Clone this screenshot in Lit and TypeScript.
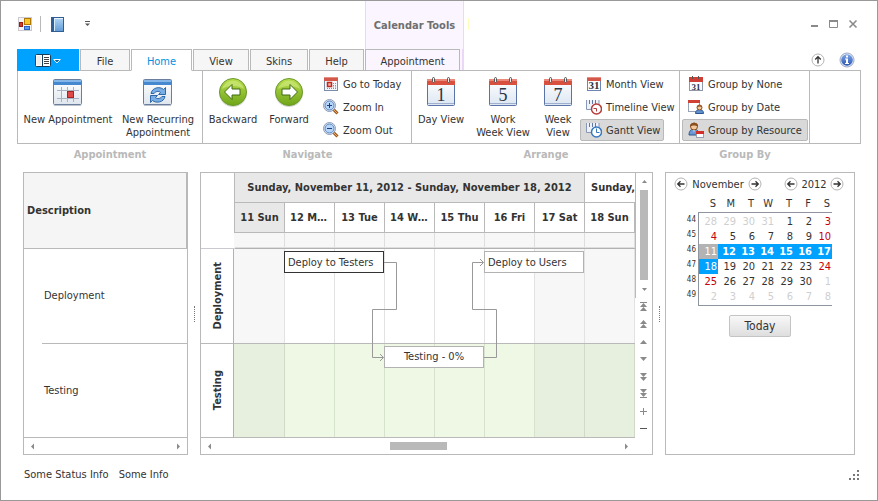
import { LitElement, html, css, svg, nothing } from "lit";
import { customElement, state } from "lit/decorators.js";
import { classMap } from "lit/directives/class-map.js";

/* ---------- icons ---------- */

const bigDefs = (id: string, top: string, bottom: string) => svg`
  <defs><linearGradient id=${id} x1="0" y1="0" x2="0" y2="1">
    <stop offset="0" stop-color=${top}/><stop offset="1" stop-color=${bottom}/>
  </linearGradient></defs>`;

const appIcon = html`<svg width="14" height="14" viewBox="0 0 14 14">
  <rect x=".5" y=".5" width="13" height="13" fill="#f4f4f6" stroke="#c9c9cf"/>
  <rect x="1.500" y="5.500" width="3" height="4" fill="#d23a2a" stroke="#9c1c12"/>
  <rect x="6.500" y="1.500" width="6" height="6" fill="#fbc62b" stroke="#b07a06"/>
  <rect x="6.500" y="9.500" width="5" height="3" fill="#5b9bf0" stroke="#2b62c4"/>
</svg>`;

const bookIcon = html`<svg width="13" height="15" viewBox="0 0 13 15">
  ${bigDefs("bk", "#b4d8f6", "#5f9ad6")}
  <rect x=".5" y=".5" width="12" height="14" fill="url(#bk)" stroke="#2f5f95"/>
  <path d="M1 1h2v13H1z" fill="#2d5f96"/><path d="M3.500 1v13" stroke="#d8ecfb"/>
  <path d="M4 1.500h8" stroke="#e8f3fc"/>
</svg>`;

const fileMenuIcon = html`<svg width="26" height="13" viewBox="0 0 26 13">
  <rect x=".5" y=".5" width="15" height="12" rx="1" fill="#fff" stroke="#123e5c"/>
  <path d="M7.500 1v11" stroke="#123e5c"/><path d="M2 2h4v9H2z" fill="#eee"/>
  <path d="M9 3.500h5M9 5.500h5M9 7.500h5M9 9.500h5" stroke="#444"/>
  <path d="M18.700 5.500h6.600L22 8.900z" fill="#0a5f9a" stroke="#fff"/>
</svg>`;

const calFrame = (inner: unknown) => html`<svg width="32" height="32" viewBox="0 0 32 32">
  ${bigDefs("cf", "#ffffff", "#dfe6ee")}
  <rect x="1.500" y="3.500" width="28" height="25" rx="1" fill="url(#cf)" stroke="#6b7f9c"/>
  <path d="M2 4h27v5H2z" fill="#4688d0"/><path d="M2 4h27v2H2z" fill="#86b6e8"/>
  ${inner}
  <path d="M2 29.500h27" stroke="#bcc3cd"/>
</svg>`;

const newAppt = calFrame(svg`
  <path d="M5 14.500h22M5 22.500h22M9.500 11v15M15.500 11v15M21.500 11v15" stroke="#a7b2c2"/>
  <rect x="15.500" y="15.500" width="6" height="6" fill="#e04848" stroke="#a82424"/>`);

const newRecurring = calFrame(svg`
  <path d="M9 17.500c1-6 9-7.500 12.500-4l2-2v7h-7l2-2c-2-2-5-1-6.500 1z" fill="#78aee4" stroke="#2f68a8"/>
  <path d="M23 20.500c-1 6-9 7-12.500 4l-2 2v-7h7l-2 2c2 2 5 1 6.500-1z" fill="#78aee4" stroke="#2f68a8"/>`);

const arrowBall = (d: string) => html`<svg width="32" height="32" viewBox="0 0 32 32">
  ${bigDefs("gb", "#b8dd4c", "#6fa518")}
  <ellipse cx="16" cy="17" rx="14" ry="14" fill="#d4d8cc"/>
  <circle cx="16" cy="16" r="13.500" fill="url(#gb)" stroke="#6a9a2c"/>
  <path d="M5 13a11.500 11.500 0 0 1 22 0c-6-4-16-4-22 0z" fill="#d3ec85" opacity=".6"/>
  <path d=${d} fill="#fff" stroke="#3f6a10"/>
</svg>`;
const backIcon = arrowBall("M7.500 16L15 8.500V13h8v6h-8v4.500z");
const fwdIcon = arrowBall("M24.500 16L17 8.500V13H9v6h8v4.500z");

const dayIcon = (n: string) => html`<svg width="32" height="32" viewBox="0 0 32 32">
  ${bigDefs("dy", "#ffffff", "#dce6f2")}
  <rect x="2.500" y="3.500" width="27" height="26" rx="1" fill="url(#dy)" stroke="#5b74a8"/>
  <path d="M2 3h28v6H2z" fill="#d9503f"/><path d="M2 3h28v2H2z" fill="#ea8a7c"/>
  <path d="M3 27.500h26" stroke="#9fb0cf"/>
  <rect x="7.500" y="1.500" width="2" height="5" rx="1" fill="#eee" stroke="#555"/>
  <rect x="22.500" y="1.500" width="2" height="5" rx="1" fill="#eee" stroke="#555"/>
  <text x="16" y="25" class="daynum" text-anchor="middle">${n}</text>
</svg>`;

const todayIcon = html`<svg width="16" height="16" viewBox="0 0 16 16">
  <rect x="1.500" y="1.500" width="13" height="13" fill="#f4f7fb" stroke="#7d8cab"/>
  <path d="M1 1h14v4H1z" fill="#d4584a"/><path d="M1 1h14v1H1z" fill="#e68d80"/>
  <path d="M10 7.500h4M10 9.500h4M4 12.500h10M10 11h4" stroke="#8291b5" stroke-dasharray="1 1"/>
  <rect x="4.500" y="6.500" width="4" height="4" fill="#f3b3aa" stroke="#c02a1c" stroke-width="1.500"/>
</svg>`;

const zoomIcon = (plus: boolean) => html`<svg width="16" height="16" viewBox="0 0 16 16">
  <path d="M10 10l4.500 4.500" stroke="#9a5a22" stroke-width="3"/>
  <path d="M11 11l3.500 3.500" stroke="#f0a860"/>
  <circle cx="6.500" cy="6.500" r="6" fill="#e4ecf6" stroke="#8a9ab5"/>
  <circle cx="6.500" cy="6.500" r="4.500" fill="#b4d4f8" stroke="#5c86c0"/>
  <path d=${plus ? "M4 6.500h5M6.500 4v5" : "M4 6.500h5"} stroke="#1e3c78"/>
</svg>`;

const rings = svg`<path d="M4.500 0v3M10.500 0v3" stroke="#555"/>`;

const monthIcon = html`<svg width="16" height="16" viewBox="0 0 16 16">
  <rect x="1.500" y="1.500" width="13" height="13" fill="#fafcff" stroke="#7084b4"/>
  <path d="M1 1h14v4H1z" fill="#d4584a"/><path d="M1 1h14v1H1z" fill="#e68d80"/>
  <text x="8" y="13" class="num31" text-anchor="middle">31</text>
</svg>`;

const clockPage = (ring: string, hand: string) => html`<svg width="16" height="16" viewBox="0 0 16 16">
  <path d="M.5 1v9.500H13V1" fill="#eef2f8" stroke="#8a98b8"/>
  <path d="M3.500 1v4M6.500 1v4M9.500 1v4" stroke="#6478a8"/>
  <circle cx="10.500" cy="10" r="5" fill="#fff" stroke=${ring} stroke-width="1.500"/>
  <path d=${hand} fill="none" stroke=${ring}/>
</svg>`;
const timelineIcon = clockPage("#b83a3a", "M7.500 9.500h3v3");
const ganttIcon = clockPage("#3678c0", "M10.500 6.500v4h3");

const groupNoneIcon = html`<svg width="16" height="16" viewBox="0 0 16 16">
  <rect x="1.500" y="2.500" width="13" height="12" fill="#fafcff" stroke="#9098a8"/>
  <path d="M1 1h14v5H1z" fill="#cf3f35"/>${rings}
  <text x="8" y="14" class="num31 slim" text-anchor="middle">31</text>
</svg>`;

const person = (x: number, y: number) => svg`<g transform="translate(${x} ${y})">
  <path d="M0 9c0-3 2-4 4-4s4 1 4 4z" fill="#5e90d0" stroke="#2c568f"/>
  <circle cx="4" cy="3" r="2.500" fill="#f2c79c" stroke="#8a4f1e"/>
  <path d="M1.500 3C1 0 7 0 6.500 3 5 1.500 3 2 1.500 3z" fill="#8a4f1e"/></g>`;

const groupDateIcon = html`<svg width="16" height="16" viewBox="0 0 16 16">
  <rect x=".5" y="1.500" width="11" height="11" fill="#fff" stroke="#98a2b6"/>
  <path d="M0 1h12v3H0z" fill="#d04034"/>${person(7.5, 5.5)}
</svg>`;
const groupResIcon = html`<svg width="16" height="16" viewBox="0 0 16 16">
  <path d="M1 13c0-4 2-6 5-6s5 2 5 6z" fill="#6c9ad4" stroke="#2c568f"/>
  <path d="M4.500 7l1.500 3 1.500-3z" fill="#fff"/>
  <circle cx="6" cy="4.500" r="3.500" fill="#f2c79c" stroke="#8a4f1e"/>
  <path d="M2 5C1 0 11-1 10 5 8 3 4 3 2 5z" fill="#8a4f1e"/>
  <rect x="8.500" y="9.500" width="7" height="6" fill="#fff" stroke="#98a2b6"/>
  <path d="M8 9h8v3H8z" fill="#d42e28"/>
</svg>`;

const roundArrow = (d: string) => html`<svg width="14" height="14" viewBox="0 0 14 14">
  <circle cx="7" cy="7" r="6" fill="#fff" stroke="#b4b4b4"/>
  <path d=${d} fill="none" stroke="#333" stroke-width="1.300"/>
</svg>`;
const LEFT = "M10.500 7H4M6.500 4.200L3.700 7l2.800 2.800";
const RIGHT = "M3.500 7H10M7.500 4.200L10.300 7l-2.800 2.800";
const UP = "M7 10.500V4M4.200 6.500L7 3.700l2.800 2.800";

const infoIcon = html`<svg width="16" height="16" viewBox="0 0 16 16">
  ${bigDefs("inf", "#7fa6e6", "#2a56b4")}
  <circle cx="8" cy="8" r="7" fill="#e6ecf6" stroke="#9aa8c4"/>
  <circle cx="8" cy="8" r="5.800" fill="url(#inf)"/>
  <path d="M7 3.500h2v2H7zM6 6.500h3V11h1v1H6v-1h1V7.500H6z" fill="#fff"/>
</svg>`;

const tri = (d: string) => html`<svg width="7" height="11" viewBox="0 0 7 11"><path d=${d} fill="#8a8a8a"/></svg>`;
const TRI = {
  left: tri("M5 2.500v6L2 5.500z"),
  right: tri("M2 2.500v6l3-3z"),
  up: tri("M1 7h5L3.500 4z"),
  down: tri("M1 4h5L3.500 7z"),
};

const stepIcon = (d: string, stroke = "none") => html`<svg width="8" height="10" viewBox="0 0 8 10">
  <path d=${d} fill=${stroke === "none" ? "#8a8a8a" : "none"} stroke=${stroke}/></svg>`;
const STEPS: [string, unknown][] = [
  ["First", stepIcon("M0 0h7v1H0zM3.500 1L7 5H0zM3.500 5L7 9H0z")],
  ["Page up", stepIcon("M3.500 1L7 5H0zM3.500 5L7 9H0z")],
  ["Up", stepIcon("M3.500 3L7 7H0z")],
  ["Down", stepIcon("M3.500 7L7 3H0z")],
  ["Page down", stepIcon("M3.500 5L7 1H0zM3.500 9L7 5H0z")],
  ["Last", stepIcon("M3.500 4L7 0H0zM3.500 8L7 4H0zM0 8h7v1H0z")],
  ["Zoom in", stepIcon("M0 4.500h7M3.500 1v7", "#8a8a8a")],
  ["Zoom out", stepIcon("M0 4.500h7", "#555")],
];

/* ---------- shared styles ---------- */

const base = css`
  * { box-sizing: border-box; }
  button {
    font: inherit; color: inherit; background: none; border: 0; padding: 0; margin: 0;
    display: flex; align-items: center; justify-content: center;
  }
  svg { display: block; flex: none; }
  .daynum { font: 18px "Liberation Serif", serif; fill: #2c3446; }
  .num31 { font: bold 11px "Liberation Serif", serif; fill: #2c3446; }
  .slim { font-size: 9px; }
`;

/* ---------- ribbon ---------- */

@customElement("ribbon-bar")
class RibbonBar extends LitElement {
  @state() private tab = "Home";

  static styles = [base, css`
    :host { display: block; padding: 0 16px; }
    .tabs { display: flex; gap: 1px; position: relative; margin-bottom: -1px; }
    .tab {
      height: 22px; background: #f6f6f6; border: 1px solid #b9b9b9; padding-top: 2px;
    }
    .menu { width: 62px; height: 22px; background: #00a2ff; }
    .file { width: 50px; } .home { width: 61px; } .view { width: 56px; }
    .skins { width: 58px; } .help { width: 55px; }
    .tab.on { background: #fff; color: #0091e0; border-bottom-color: #fff; }
    .context {
      width: 99px; height: 21px; background: #faf5fe;
      border-right: 2px solid #ead8f8;
    }
    .context .tab { width: 95px; background: #faf5fe; }
    .tools { margin-left: auto; display: flex; align-items: center; gap: 14px; padding-right: 6px; }
    .groups { display: grid; grid-template-columns: 186px 209px 268px 130px 1fr; }
    .body {
      display: flex; height: 74px; padding: 2px 2px 0;
      border: solid #b9b9b9; border-width: 1px 1px 1px 0;
    }
    .group:first-child .body { border-left-width: 1px; }
    .arrange .body { gap: 2px; }
    .cap { text-align: center; color: #b9b9b9; font-weight: bold; line-height: 21px; }
    .big { flex: none; flex-direction: column; justify-content: flex-start; padding-top: 3px; line-height: 13px; text-align: center; }
    .big svg { margin-bottom: 5px; }
    .w40 { width: 40px; } .w54 { width: 54px; } .w56 { width: 56px; }
    .w66 { width: 66px; } .w84 { width: 84px; } .w96 { width: 96px; }
    .small { display: flex; flex-direction: column; align-items: flex-start; gap: 1px; }
    .arrange .small { min-width: 0; width: 96px; }
    .sm { flex: none; height: 22px; padding: 0 5px; gap: 4px; border: 1px solid transparent; white-space: nowrap; }
    .arrange .sm { padding-right: 3px; }
    .sm.on { background: #d9d9d9; border-color: #b9b9b9; border-radius: 2px; }
  `];

  private big(icon: unknown, label: unknown, w: string) {
    return html`<button class="big ${w}">${icon}<span>${label}</span></button>`;
  }
  private sm(icon: unknown, label: string, on = false) {
    return html`<button class=${classMap({ sm: true, on })}>${icon}<span>${label}</span></button>`;
  }
  private tabBtn(label: string) {
    const on = this.tab === label;
    return html`<button class="tab ${label.toLowerCase()} ${on ? "on" : ""}" role="tab"
      aria-selected=${on} @click=${() => (this.tab = label)}>${label}</button>`;
  }

  render() {
    return html`
      <div class="tabs">
        <button class="menu" aria-label="Application menu">${fileMenuIcon}</button>
        ${["File", "Home", "View", "Skins", "Help"].map((t) => this.tabBtn(t))}
        <div class="context">${this.tabBtn("Appointment")}</div>
        <div class="tools">
          <button aria-label="Collapse">${roundArrow(UP)}</button>
          <button aria-label="About">${infoIcon}</button>
        </div>
      </div>
      <div class="groups">
        <div class="group"><div class="body">
          ${this.big(newAppt, "New Appointment", "w96")}
          ${this.big(newRecurring, html`New Recurring<br>Appointment`, "w84")}
        </div><div class="cap">Appointment</div></div>
        <div class="group"><div class="body">
          ${this.big(backIcon, "Backward", "w56")}
          ${this.big(fwdIcon, "Forward", "w56")}
          <div class="small">
            ${this.sm(todayIcon, "Go to Today")}${this.sm(zoomIcon(true), "Zoom In")}${this.sm(zoomIcon(false), "Zoom Out")}
          </div>
        </div><div class="cap">Navigate</div></div>
        <div class="group arrange"><div class="body">
          ${this.big(dayIcon("1"), "Day View", "w54")}
          ${this.big(dayIcon("5"), html`Work<br>Week View`, "w66")}
          ${this.big(dayIcon("7"), html`Week<br>View`, "w40")}
          <div class="small">
            ${this.sm(monthIcon, "Month View")}${this.sm(timelineIcon, "Timeline View")}${this.sm(ganttIcon, "Gantt View", true)}
          </div>
        </div><div class="cap">Arrange</div></div>
        <div class="group"><div class="body">
          <div class="small">
            ${this.sm(groupNoneIcon, "Group by None")}${this.sm(groupDateIcon, "Group by Date")}${this.sm(groupResIcon, "Group by Resource", true)}
          </div>
        </div><div class="cap">Group By</div></div>
        <div class="group"><div class="body"></div></div>
      </div>`;
  }
}

/* ---------- resource list ---------- */

@customElement("resource-list")
class ResourceList extends LitElement {
  static styles = [base, css`
    :host {
      display: grid; grid-template-rows: 76px 1fr 1fr 16px; width: 165px; flex: none;
      border: 1px solid #b9b9b9; background: #fff;
    }
    .head {
      display: flex; align-items: center; padding-left: 3px; font-weight: bold;
      background: #f5f5f5; border-bottom: 1px solid #b9b9b9; border-right: 1px solid #b9b9b9;
    }
    .row { display: flex; align-items: center; margin-left: 18px; padding-left: 2px; border-bottom: 1px solid #b9b9b9; }
    .bar { display: flex; align-items: center; justify-content: space-between; padding: 0 5px; }
    .row.last { margin-left: 0; padding-left: 20px; }
  `];
  render() {
    return html`
      <div class="head">Description</div>
      <div class="row">Deployment</div>
      <div class="row last">Testing</div>
      <div class="bar"><button aria-label="Scroll left">${TRI.left}</button><button aria-label="Scroll right">${TRI.right}</button></div>`;
  }
}

/* ---------- gantt chart ---------- */

const DAYS = ["11 Sun", "12 Mon", "13 Tue", "14 Wed", "15 Thu", "16 Fri", "17 Sat", "18 Sun"];
const WEEKEND = [0, 6, 7];

@customElement("gantt-chart")
class GanttChart extends LitElement {
  static styles = [base, css`
    :host {
      display: grid; grid-template-columns: 33px minmax(0, 1fr) 17px;
      grid-template-rows: 76px minmax(0, 1fr) 16px; flex: 1; min-width: 0;
      border: 1px solid #b9b9b9; background: #fff;
    }
    .corner { border-bottom: 1px solid #c9c9cf; }
    .head { display: grid; grid-template-rows: 30px 30px 16px; overflow: hidden; font-weight: bold; }
    .weeks, .days, .strip { display: grid; grid-template-columns: repeat(8, minmax(0, 1fr)); border-left: 1px solid #b9b9b9; }
    .cell {
      display: block; line-height: 29px; text-align: center; border: solid #b9b9b9; border-width: 0 1px 1px 0;
      overflow: hidden; white-space: nowrap; text-overflow: ellipsis; padding: 0 5px;
    }
    .cell.now { background: #e8e8e8; }
    .wide { grid-column: span 7; }
    .clip { border-right: 0; text-overflow: clip; text-align: left; padding: 0 0 0 6px; }
    .strip { border-bottom: 1px solid #b2b2b2; border-left-color: #f7f7f7; }
    .strip span { background: #f7f7f7; border: solid #dedede; border-width: 0 1px 1px 0; }

    .names { display: grid; grid-template-rows: 1fr 1fr; border-right: 1px solid #b2b2b2; }
    .name { display: flex; align-items: center; justify-content: center; border-bottom: 1px solid #b9b9b9; font-weight: bold; }
    .name span { writing-mode: vertical-rl; transform: rotate(180deg); }
    .chart { position: relative; display: grid; grid-template-rows: 1fr 1fr; }
    .lane {
      display: grid; grid-template-columns: repeat(8, minmax(0, 1fr)); grid-template-rows: 1fr;
      border-bottom: 1px solid #b9b9b9; padding-left: 1px;
    }
    .slot { border-right: 1px solid #e2e2e2; background: #fff; }
    .slot.off { background: #f7f7f7; }
    .slot.first { margin-left: -1px; }
    .green .slot { background: #eff8e5; border-color: #d6e2cb; }
    .green .slot.off { background: #e7f0de; border-color: #d0dac6; }
    .tasks { position: absolute; inset: 0 1px 0 0; display: grid; grid-template-rows: 1fr 1fr; grid-template-columns: repeat(8, minmax(0, 1fr)); }
    .task {
      height: 22px; margin-top: 2px; border: 1px solid #b2b2b2; background: #fff; z-index: 1;
      justify-content: flex-start; padding: 0 3px; white-space: nowrap;
    }
    .t1 { grid-area: 1 / 2 / 2 / 4; border-color: #333; }
    .t2 { grid-area: 1 / 6 / 2 / 8; }
    .t3 { grid-area: 2 / 4 / 3 / 6; justify-content: center; }
    .links { position: absolute; inset: 0; width: 100%; height: 100%; overflow: visible; }
    .links path { fill: none; stroke: #999; vector-effect: non-scaling-stroke; }

    .side { grid-area: 1 / 3 / 3 / 4; display: flex; flex-direction: column; }
    .vbar {
      height: 125px; border-left: 1px solid #b9b9b9; display: flex; flex-direction: column;
      align-items: center; padding: 3px 0;
    }
    .vthumb { flex: 1; width: 8px; background: #b9b9b9; margin: 3px 0 4px; }
    .steps { flex: 1; display: flex; flex-direction: column; align-items: center; justify-content: space-around; padding-left: 1px; }
    .hbar { grid-area: 3 / 1 / 4 / 3; display: grid; grid-template-columns: 7px 1fr 7px; align-items: center; padding: 0 5px; }
    .track { display: flex; justify-content: center; }
    .hthumb { width: 57px; height: 8px; background: #b9b9b9; }
  `];

  private lane(green: boolean) {
    return html`<div class="lane ${green ? "green" : ""}">
      ${DAYS.map((_, i) => html`<div class=${classMap({ slot: true, off: WEEKEND.includes(i), first: i === 0 })}></div>`)}
    </div>`;
  }

  render() {
    return html`
      <div class="corner"></div>
      <div class="head">
        <div class="weeks">
          <div class="cell wide now">Sunday, November 11, 2012 - Sunday, November 18, 2012</div>
          <div class="cell clip">Sunday,</div>
        </div>
        <div class="days">${DAYS.map((d, i) => html`<div class=${classMap({ cell: true, now: i === 0 })}>${d}</div>`)}</div>
        <div class="strip">${DAYS.map(() => html`<span></span>`)}</div>
      </div>
      <div class="side">
        <div class="vbar">
          <button aria-label="Scroll up">${TRI.up}</button>
          <div class="vthumb"></div>
          <button aria-label="Scroll down">${TRI.down}</button>
        </div>
        <div class="steps">${STEPS.map(([l, i]) => html`<button aria-label=${l}>${i}</button>`)}</div>
      </div>
      <div class="names">
        <div class="name"><span>Deployment</span></div>
        <div class="name"><span>Testing</span></div>
      </div>
      <div class="chart">
        ${this.lane(false)}${this.lane(true)}
        <div class="tasks">
          <svg class="links" viewBox="0 0 400 189" preserveAspectRatio="none">
            <path d="M150 13.500h12.500v47h-24v48h11M146 105l3.500 3.500L146 112"/>
            <path d="M250 108.500h12.500v-48h-24v-47h11M246 10l3.500 3.500L246 17"/>
          </svg>
          <button class="task t1">Deploy to Testers</button>
          <button class="task t2">Deploy to Users</button>
          <button class="task t3">Testing - 0%</button>
        </div>
      </div>
      <div class="hbar">
        <button aria-label="Scroll left">${TRI.left}</button>
        <div class="track"><div class="hthumb"></div></div>
        <button aria-label="Scroll right">${TRI.right}</button>
      </div>`;
  }
}

/* ---------- date navigator ---------- */

@customElement("date-navigator")
class DateNavigator extends LitElement {
  static styles = [base, css`
    :host { display: block; width: 190px; flex: none; border: 1px solid #b9b9b9; background: #fff; }
    .nav { display: flex; align-items: center; height: 22px; padding: 0 10px 0 8px; }
    .month { width: 60px; text-align: center; }
    .year { width: 32px; text-align: center; }
    .prev { margin-left: auto; }
    table { border-collapse: separate; border-spacing: 0; margin-left: 12px; font-size: 11px; }
    th, td { padding: 0; width: 19px; height: 15px; line-height: 15px; text-align: right; font-weight: normal; }
    thead th { height: 17px; line-height: 17px; padding-right: 2px; }
    td { padding-right: 1px; }
    tbody th { width: 21px; font-size: 8px; line-height: 12px; vertical-align: top; padding-right: 2px; border-right: 1px solid #8f959e; }
    .edge th, .edge td { height: 2px; line-height: 2px; }
    .edge.top td { border-top: 1px solid #8f959e; }
    .edge.bottom td { border-bottom: 1px solid #8f959e; }
    .out { color: #cfcfcf; }
    .red { color: #c8000a; }
    .sel { background: #00a2ff; color: #fff; font-weight: bold; }
    .cur { background: #b3b3b3; color: #fff; }
    .one { background: #00a2ff; color: #fff; }
    .today {
      width: 62px; height: 22px; margin: 9px auto 0; border: 1px solid #c4c4c4; border-radius: 2px;
      background: linear-gradient(#f8f8f8, #dedede); font-size: 12px;
    }
  `];

  private cell(i: number) {
    const raw = i - 3;
    const day = raw < 1 ? 31 + raw : raw > 30 ? raw - 30 : raw;
    const inMonth = raw >= 1 && raw <= 30;
    const cls = !inMonth ? "out" : raw === 11 ? "cur" : raw > 11 && raw < 18 ? "sel"
      : raw === 18 ? "one" : i % 7 === 0 || i % 7 === 6 ? "red" : "";
    return html`<td class=${cls || nothing}>${day}</td>`;
  }

  render() {
    return html`
      <div class="nav">
        <button aria-label="Previous month">${roundArrow(LEFT)}</button>
        <span class="month">November</span>
        <button aria-label="Next month">${roundArrow(RIGHT)}</button>
        <button class="prev" aria-label="Previous year">${roundArrow(LEFT)}</button>
        <span class="year">2012</span>
        <button aria-label="Next year">${roundArrow(RIGHT)}</button>
      </div>
      <table>
        <thead><tr><th></th>${[..."SMTWTFS"].map((d) => html`<th scope="col">${d}</th>`)}</tr></thead>
        <tbody>
          <tr class="edge top"><th></th><td colspan="7"></td></tr>
          ${[0, 1, 2, 3, 4, 5].map((w) => html`<tr><th scope="row">${44 + w}</th>
            ${[0, 1, 2, 3, 4, 5, 6].map((d) => this.cell(w * 7 + d))}</tr>`)}
          <tr class="edge bottom"><th></th><td colspan="7"></td></tr>
        </tbody>
      </table>
      <button class="today">Today</button>`;
  }
}

/* ---------- window ---------- */

@customElement("app-root")
class AppRoot extends LitElement {
  static styles = [base, css`
    :host {
      display: flex; flex-direction: column; box-sizing: border-box; min-height: 100vh;
      border: 1px solid #999; background: #fff; color: #333;
      font: 11px/13px "DejaVu Sans Condensed", Tahoma, "Noto Sans", sans-serif;
    }
    .title { display: flex; height: 48px; }
    .quick { display: flex; align-items: center; width: 364px; padding: 0 0 2px 17px; }
    .sep { width: 1px; height: 16px; background: #b9b9b9; margin: 0 10px 0 8px; }
    .more { margin-left: 20px; }
    .ctx {
      width: 99px; display: flex; align-items: center; justify-content: center; background: #faf5fe;
      border: solid #ead8f8; border-width: 0 1px; font-weight: bold; color: #6f6f6f;
    }
    .mark { width: 1px; height: 12px; background: #fdfdc0; margin: 17px 0 0 4px; }
    .win { margin-left: auto; display: flex; align-items: center; gap: 9px; padding: 0 19px 2px 0; }
    .main { flex: 1; display: flex; padding: 0 22px; margin-top: 7px; }
    .split { width: 12px; flex: none; display: flex; align-items: center; justify-content: center; }
    .split i { height: 16px; border-left: 1px dotted #777; }
    .status { display: flex; align-items: center; gap: 10px; height: 45px; padding: 0 17px 6px 23px; }
    .grip { margin-left: auto; }
  `];

  render() {
    return html`
      <div class="title">
        <div class="quick">
          ${appIcon}<span class="sep"></span>
          <button aria-label="Open">${bookIcon}</button>
          <button class="more" aria-label="Customize">
            <svg width="7" height="6" viewBox="0 0 7 6"><path d="M1 .5h5" stroke="#555"/><path d="M1 2.500h5L3.500 5z" fill="#555"/></svg>
          </button>
        </div>
        <div class="ctx">Calendar Tools</div>
        <span class="mark"></span>
        <div class="win">
          <button aria-label="Minimize"><svg width="10" height="10" viewBox="0 0 10 10"><path d="M1 7h7" stroke="#8a8a8a" stroke-width="2"/></svg></button>
          <button aria-label="Maximize"><svg width="10" height="10" viewBox="0 0 10 10"><path d="M.5 2v6.500h8V2" fill="none" stroke="#8a8a8a"/><path d="M0 2h9" stroke="#8a8a8a" stroke-width="2"/></svg></button>
          <button aria-label="Close"><svg width="10" height="10" viewBox="0 0 10 10"><path d="M1.500 1.500l7 7M8.500 1.500l-7 7" stroke="#8a8a8a" stroke-width="1.600"/></svg></button>
        </div>
      </div>
      <ribbon-bar></ribbon-bar>
      <div class="main">
        <resource-list></resource-list>
        <div class="split"><i></i></div>
        <gantt-chart></gantt-chart>
        <div class="split"><i></i></div>
        <date-navigator></date-navigator>
      </div>
      <div class="status">
        <span>Some Status Info</span><span>Some Info</span>
        <svg class="grip" width="12" height="10" viewBox="0 0 12 10">
          <path d="M9 0h2v2H9zM5 4h2v2H5zM9 4h2v2H9zM1 8h2v2H1zM5 8h2v2H5zM9 8h2v2H9z" fill="#777"/>
        </svg>
      </div>`;
  }
}
